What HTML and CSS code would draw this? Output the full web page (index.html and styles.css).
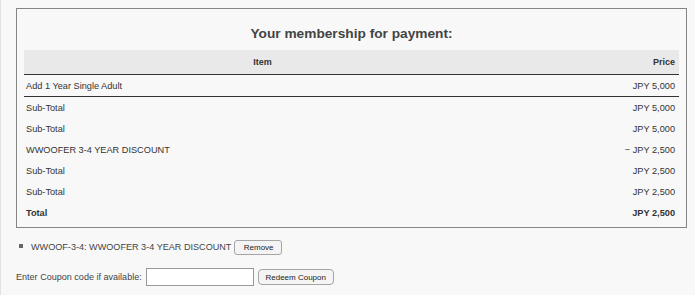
FILE: index.html
```html
<!DOCTYPE html>
<html lang="en">

<head>
    <meta charset="utf-8">
    <title>Membership payment</title>
    <link rel="stylesheet" href="styles.css">
</head>

<body>

    <div class="page">
        <div class="order-box">
            <h2>Your membership for payment:</h2>
            <table class="order">
                <thead>
                    <tr>
                        <th class="item">Item</th>
                        <th class="price">Price</th>
                    </tr>
                </thead>
                <tbody>
                    <tr class="first">
                        <td>Add 1 Year Single Adult</td>
                        <td class="price">JPY 5,000</td>
                    </tr>
                    <tr>
                        <td>Sub-Total</td>
                        <td class="price">JPY 5,000</td>
                    </tr>
                    <tr>
                        <td>Sub-Total</td>
                        <td class="price">JPY 5,000</td>
                    </tr>
                    <tr>
                        <td>WWOOFER 3-4 YEAR DISCOUNT</td>
                        <td class="price">&minus; JPY 2,500</td>
                    </tr>
                    <tr>
                        <td>Sub-Total</td>
                        <td class="price">JPY 2,500</td>
                    </tr>
                    <tr>
                        <td>Sub-Total</td>
                        <td class="price">JPY 2,500</td>
                    </tr>
                    <tr class="total">
                        <td>Total</td>
                        <td class="price">JPY 2,500</td>
                    </tr>
                </tbody>
            </table>
        </div>

        <ul class="coupons">
            <li>WWOOF-3-4: WWOOFER 3-4 YEAR DISCOUNT <button class="btn">Remove</button></li>
        </ul>

        <form class="coupon-form">
            <label for="coupon">Enter Coupon code if available:</label>
            <input type="text" id="coupon">
            <button type="button" class="btn">Redeem Coupon</button>
        </form>
    </div>

</body>

</html>
```

FILE: styles.css
```css
body {
    margin: 0;
    background-color: #f8f8f8;
    font-family: 'Liberation Sans', Arial, sans-serif;
    color: #333;
}

.page {
    border-left: 1px solid #e2e2e2;
    min-height: 295px;
    padding: 8px 8px 0 15px;
}

.order-box {
    width: 655px;
    border: 1px solid #858585;
    padding: 0 7px 4px 7px;
}

h2 {
    font-size: 13.7px;
    font-weight: 700;
    color: #444;
    text-align: center;
    margin: 0;
    padding: 17px 0 9px 0;
}

.order {
    width: 100%;
    border-collapse: collapse;
    font-size: 9.2px;
}

.order th {
    background-color: #e9e9e9;
    font-weight: 700;
    font-size: 9px;
    height: 24px;
    padding: 0 4px;
    border-bottom: 1px solid #333;
}

.order th.item {
    text-align: center;
}

.order td {
    height: 21px;
    padding: 0 4px 0 2px;
}

.order .price {
    text-align: right;
    width: 170px;
}

.order tr.first td {
    height: 21px;
    border-bottom: 1px solid #333;
}

.order tr.total td {
    font-weight: 700;
}

.coupons {
    margin: 12px 0 0 0;
    padding-left: 3px;
    list-style: none;
    font-size: 9.1px;
    color: #444;
}

.coupons li::before {
    content: "";
    display: inline-block;
    width: 4px;
    height: 4px;
    background-color: #666;
    margin-right: 8px;
    vertical-align: 2px;
}

.btn {
    font-family: 'Liberation Sans', Arial, sans-serif;
    font-size: 8px;
    color: #222;
    background-color: #f4f4f4;
    border: 1px solid #a5a5a5;
    border-radius: 3px;
    padding: 0 9px;
    height: 15px;
    vertical-align: middle;
}

.coupons .btn {
    width: 48px;
    margin-left: 0;
}

.coupon-form {
    margin: 13px 0 0 0;
    font-size: 9.05px;
    color: #444;
    display: flex;
    align-items: center;
    gap: 4px;
}

.coupon-form input {
    width: 108px;
    height: 18px;
    box-sizing: border-box;
    border: 1px solid #999;
    background-color: white;
    padding: 0 2px;
    margin: 0;
}

.coupon-form .btn {
    width: 76px;
    height: 16px;
    border-radius: 4px;
    padding: 0;
}
```
